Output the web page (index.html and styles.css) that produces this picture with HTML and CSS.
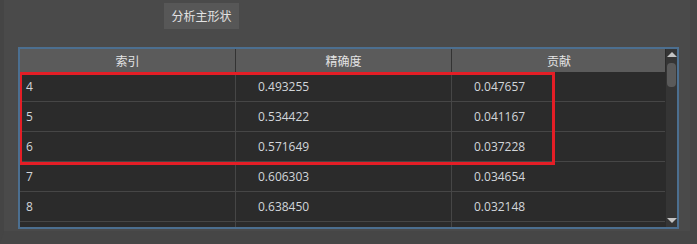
FILE: index.html
```html
<!DOCTYPE html>
<html>
<head>
<meta charset="utf-8">
<link rel="stylesheet" href="styles.css">
</head>
<body>
<div class="page">
  <div class="toolbar">
    <button class="btn">分析主形状</button>
  </div>
  <div class="frame">
    <div class="table">
      <div class="row head">
        <div class="cell">索引</div>
        <div class="cell">精确度</div>
        <div class="cell">贡献</div>
      </div>
      <div class="row"><div class="cell">4</div><div class="cell num">0.493255</div><div class="cell num">0.047657</div></div>
      <div class="row"><div class="cell">5</div><div class="cell num">0.534422</div><div class="cell num">0.041167</div></div>
      <div class="row"><div class="cell">6</div><div class="cell num">0.571649</div><div class="cell num">0.037228</div></div>
      <div class="row"><div class="cell">7</div><div class="cell num">0.606303</div><div class="cell num">0.034654</div></div>
      <div class="row"><div class="cell">8</div><div class="cell num">0.638450</div><div class="cell num">0.032148</div></div>
      <div class="row"><div class="cell"></div><div class="cell num"></div><div class="cell num"></div></div>
      <div class="highlight"></div>
    </div>
    <div class="scrollbar">
      <div class="arrow up"></div>
      <div class="track"><div class="handle"></div></div>
      <div class="arrow down"></div>
    </div>
  </div>
</div>
</body>
</html>
```

FILE: styles.css
```css
html, body {
  margin: 0;
  padding: 0;
  background: #4a4a4a;
  width: 697px;
  height: 244px;
  overflow: hidden;
  font-family: "Segoe UI", "Open Sans", "Noto Sans CJK SC", sans-serif;
}
.page {
  width: 697px;
  height: 244px;
  box-sizing: border-box;
  border-left: 4px solid #454545;
  border-right: 7px solid #464646;
  border-bottom: 13px solid #464646;
  padding-top: 3px;
}
.toolbar {
  padding-left: 160px;
  height: 26px;
}
.btn {
  height: 26px;
  width: 75px;
  padding: 0;
  border: none;
  background: #575757;
  color: #e2e2e2;
  font-family: "Noto Sans CJK SC", sans-serif;
  font-size: 12px;
  line-height: 26px;
}
.frame {
  margin-top: 18px;
  margin-left: 14px;
  width: 661px;
  height: 182px;
  box-sizing: border-box;
  border: 2px solid #4c6f90;
  display: flex;
  background: #2b2b2b;
}
.table {
  position: relative;
  width: 646px;
  overflow: hidden;
}
.row {
  display: grid;
  grid-template-columns: 216px 216px 214px;
  height: 30px;
  box-sizing: border-box;
  border-bottom: 1px solid #464646;
  color: #d2d6da;
  font-size: 12px;
}
.row .cell {
  border-right: 1px solid #464646;
  padding-left: 6px;
  line-height: 30px;
  white-space: nowrap;
}
.row .cell:last-child {
  border-right: none;
}
.row .cell.num {
  padding-left: 22px;
}
.row.head {
  height: 23px;
  background: #5b5b5b;
  border-bottom: none;
  color: #e4e4e4;
  font-family: "Noto Sans CJK SC", sans-serif;
}
.row.head .cell {
  text-align: center;
  padding-left: 0;
  line-height: 23px;
  border-right: 1px solid #333333;
}
.row.head .cell:last-child {
  border-right: none;
}
.highlight {
  position: absolute;
  left: -1px;
  top: 23px;
  width: 536px;
  height: 93px;
  box-sizing: border-box;
  border: 3px solid #e41e26;
}
.scrollbar {
  width: 11px;
  background: #353535;
  display: flex;
  flex-direction: column;
  align-items: center;
  border-left: 1px solid #2b2b2b;
}
.arrow {
  width: 0;
  height: 0;
  border-left: 5px solid transparent;
  border-right: 5px solid transparent;
}
.arrow.up {
  margin-top: 3px;
  border-bottom: 5px solid #c4c4c4;
}
.arrow.down {
  margin-bottom: 4px;
  border-top: 5px solid #c4c4c4;
}
.track {
  flex: 1;
  width: 100%;
  display: flex;
  justify-content: center;
}
.handle {
  margin-top: 6px;
  width: 9px;
  height: 24px;
  border-radius: 4px;
  background: #5a5a5a;
}
```
